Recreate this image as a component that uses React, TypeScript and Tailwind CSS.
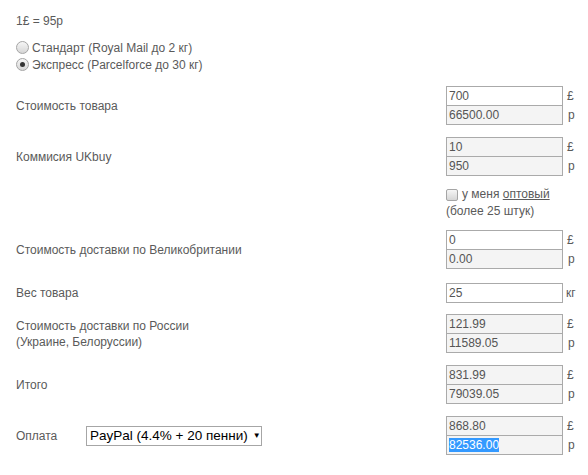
import React from "react";

const font = { fontFamily: '"Liberation Sans", Arial, sans-serif' };

function Box({ value, grey, last, selected }: { value: string; grey?: boolean; last?: boolean; selected?: boolean }) {
  return (
    <div
      className={`w-[117px] h-[20px] border border-[#aaaaaa] pl-[2px] flex items-center text-[12px] text-[#555] leading-[14px] ${grey ? "bg-[#f4f4f4]" : "bg-white"} ${last ? "-mt-px" : ""}`}
    >
      {selected ? <span className="bg-[#3399ff] text-white">{value}</span> : <span>{value}</span>}
    </div>
  );
}

function Pair({ a, b, aGrey, label, mt }: { a: string; b: string; aGrey?: boolean; label: React.ReactNode; mt: string }) {
  return (
    <div className={`flex items-center ${mt}`}>
      <div className="w-[430px] text-[12px] leading-[16px]">{label}</div>
      <div className="flex flex-col">
        <div className="flex items-center">
          <Box value={a} grey={aGrey} />
          <span className="ml-[4px] text-[12px]">£</span>
        </div>
        <div className="flex items-center -mt-px">
          <Box value={b} grey />
          <span className="ml-[5px] text-[12px]">р</span>
        </div>
      </div>
    </div>
  );
}

function Radio({ checked }: { checked?: boolean }) {
  return (
    <span className="w-[13px] h-[13px] rounded-full border border-[#a5a5a5] bg-gradient-to-b from-[#f6f6f6] to-[#d6d6d6] flex items-center justify-center">
      {checked && <span className="w-[5px] h-[5px] rounded-full bg-[#333]" />}
    </span>
  );
}

export default function App() {
  return (
    <div className="w-[588px] h-[475px] bg-white text-[#5a5a5a] pl-4 pt-[13px] overflow-hidden" style={font}>
      <div className="text-[12px] leading-[16px]">1£ = 95р</div>
      <div className="mt-[10px] flex flex-col text-[12px]">
        <div className="flex items-center h-[17px] gap-[3px]">
          <Radio />
          <span>Стандарт (Royal Mail до 2 кг)</span>
        </div>
        <div className="flex items-center h-[17px] gap-[3px]">
          <Radio checked />
          <span>Экспресс (Parcelforce до 30 кг)</span>
        </div>
      </div>

      <Pair mt="mt-[13px]" a="700" b="66500.00" label="Стоимость товара" />
      <Pair mt="mt-[12px]" a="10" aGrey b="950" label="Коммисия UKbuy" />

      <div className="flex mt-[10px]">
        <div className="w-[430px]" />
        <div className="text-[12px] leading-[17px]">
          <div className="flex items-center gap-[4px]">
            <span className="w-[12px] h-[12px] rounded-[2px] border border-[#a5a5a5] bg-gradient-to-b from-[#f6f6f6] to-[#d6d6d6]" />
            <span>
              у меня <span className="underline">оптовый</span>
            </span>
          </div>
          <div>(более 25 штук)</div>
        </div>
      </div>

      <Pair mt="mt-[10px]" a="0" b="0.00" label="Стоимость доставки по Великобритании" />

      <div className="flex items-center mt-[14px]">
        <div className="w-[430px] text-[12px] leading-[16px]">Вес товара</div>
        <Box value="25" />
        <span className="ml-[3px] text-[12px]">кг</span>
      </div>

      <Pair
        mt="mt-[11px]"
        a="121.99"
        aGrey
        b="11589.05"
        label={
          <>
            <div>Стоимость доставки по России</div>
            <div>(Украине, Белоруссии)</div>
          </>
        }
      />
      <Pair mt="mt-[12px]" a="831.99" aGrey b="79039.05" label="Итого" />

      <div className="flex items-center mt-[12px]">
        <div className="w-[430px] text-[12px] leading-[16px] flex items-center">
          <span className="w-[70px]">Оплата</span>
          <div className="h-[20px] w-[176px] border border-[#a6a6a6] bg-white flex items-center pl-[3px] text-[13.5px] text-black whitespace-nowrap overflow-hidden">
            <span>PayPal (4.4% + 20 пенни)</span>
            <span className="text-[8px] ml-[5px]">▼</span>
          </div>
        </div>
        <div className="flex flex-col">
          <div className="flex items-center">
            <Box value="868.80" grey />
            <span className="ml-[4px] text-[12px]">£</span>
          </div>
          <div className="flex items-center -mt-px">
            <Box value="82536.00" grey selected />
            <span className="ml-[5px] text-[12px]">р</span>
          </div>
        </div>
      </div>
    </div>
  );
}
